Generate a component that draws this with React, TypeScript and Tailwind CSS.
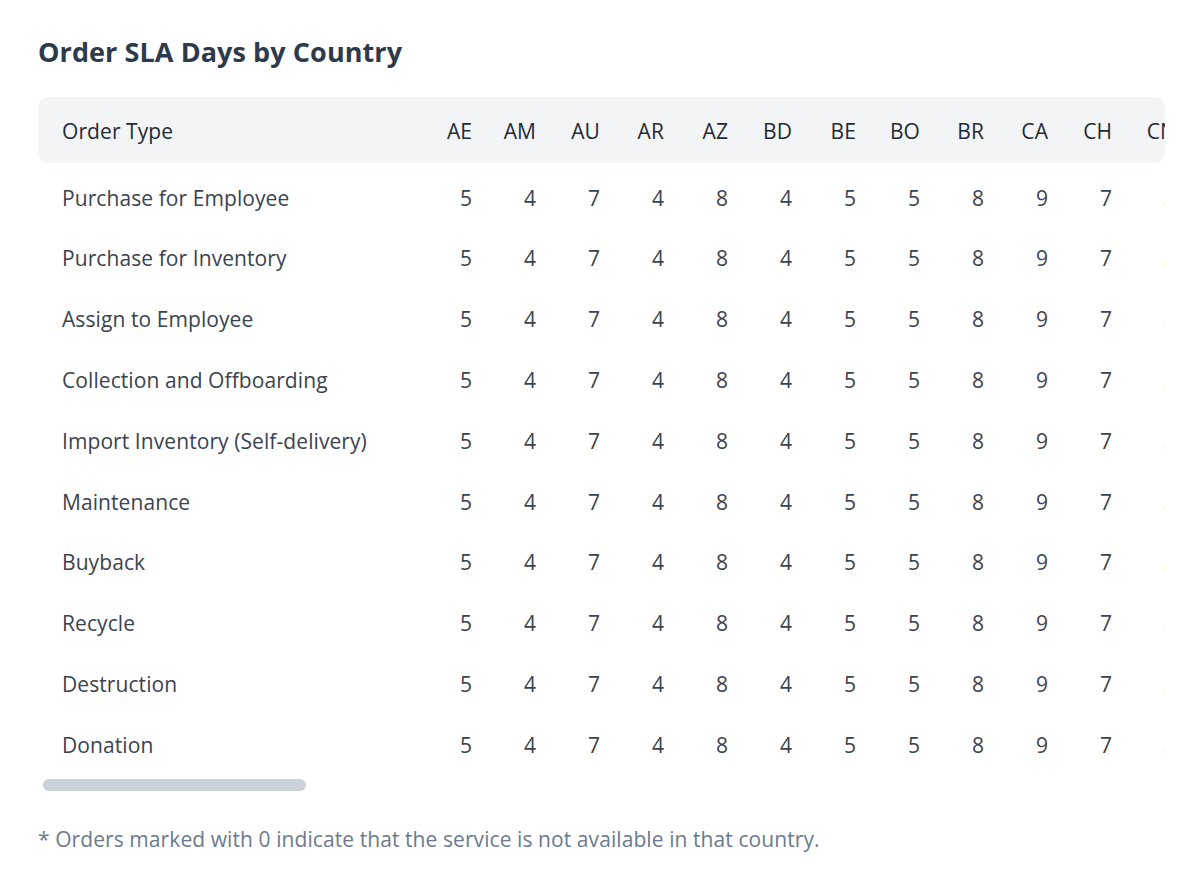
const countries = ['AE', 'AM', 'AU', 'AR', 'AZ', 'BD', 'BE', 'BO', 'BR', 'CA', 'CH', 'CN', 'CO', 'CZ'];
const days = [5, 4, 7, 4, 8, 4, 5, 5, 8, 9, 7, 3, 6, 5];

const orderTypes = [
  'Purchase for Employee',
  'Purchase for Inventory',
  'Assign to Employee',
  'Collection and Offboarding',
  'Import Inventory (Self-delivery)',
  'Maintenance',
  'Buyback',
  'Recycle',
  'Destruction',
  'Donation',
];

export default function App() {
  return (
    <div className="min-h-screen bg-white pl-[38px] pr-[35px] pt-[34px] font-['Open_Sans',sans-serif] tracking-[0.005em]">
      <h1 className="text-[27px] leading-[36px] font-bold text-[#2d3a4b]">Order SLA Days by Country</h1>

      <div className="mt-[27px] overflow-hidden">
        {/* header */}
        <div className="flex h-[66px] items-center overflow-hidden rounded-[10px] bg-gray-100 pt-1 text-[21px] font-medium text-[#1f2a37]">
          <div className="w-[370px] shrink-0 pl-6">Order Type</div>
          {countries.map((c) => (
            <div key={c} className="w-16 shrink-0 text-right">{c}</div>
          ))}
        </div>

        {/* rows */}
        <div className="mt-[5px] overflow-hidden">
          {orderTypes.map((t) => (
            <div key={t} className="flex h-[60.8px] items-center text-[21px] text-[#3a4350]">
              <div className="w-[370px] shrink-0 pl-6">{t}</div>
              {days.map((d, i) => (
                <div key={i} className="w-16 shrink-0 text-right">{d}</div>
              ))}
            </div>
          ))}
        </div>

        {/* scrollbar */}
        <div className="ml-[5px] mt-[3px] h-3 w-[263px] rounded-full bg-[#cbd2da]" />
      </div>

      <p className="mt-[34px] text-[21px] leading-[28px] text-[#6b7a8f]">
        * Orders marked with 0 indicate that the service is not available in that country.
      </p>
    </div>
  );
}
